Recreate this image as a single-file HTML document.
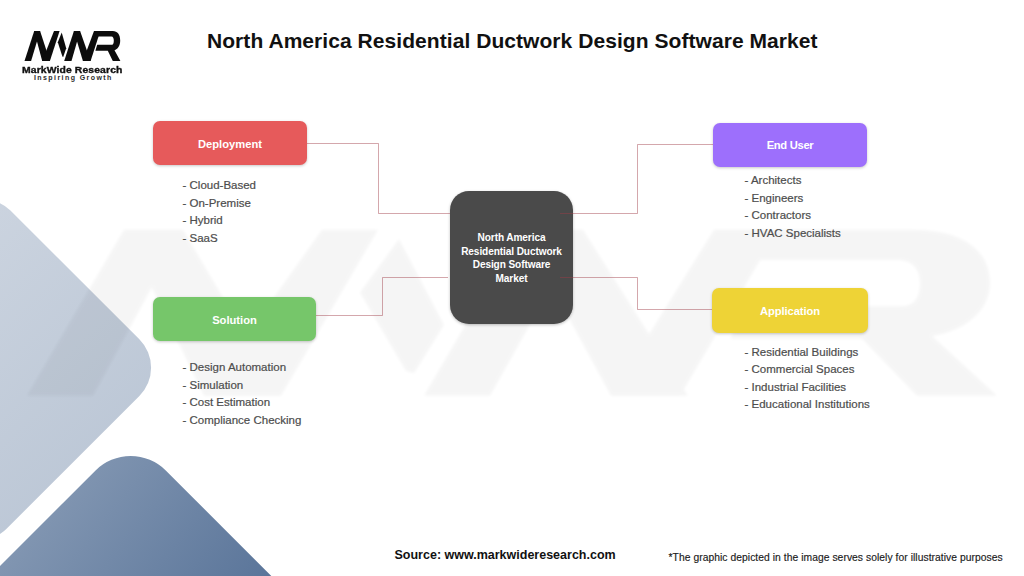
<!DOCTYPE html>
<html><head><meta charset="utf-8">
<style>
html,body{margin:0;padding:0;}
body{width:1024px;height:576px;overflow:hidden;position:relative;background:#fff;font-family:"Liberation Sans",sans-serif;}
.bg{position:absolute;left:0;top:0;}
.t{position:absolute;white-space:nowrap;line-height:normal;}
.box{position:absolute;border-radius:7px;color:#fff;font-weight:bold;font-size:11.2px;display:flex;align-items:center;justify-content:center;box-shadow:0 1px 3px rgba(0,0,0,0.22);padding-top:2px;box-sizing:border-box;}
.list{position:absolute;font-size:11.5px;line-height:17.5px;color:#4d4d4d;white-space:nowrap;-webkit-text-stroke:0.2px #4d4d4d;}
</style></head>
<body>
<svg class="bg" width="1024" height="576" viewBox="0 0 1024 576">
  <defs>
    <linearGradient id="gl" x1="0" y1="0" x2="1" y2="1">
      <stop offset="0" stop-color="#d3dae4"/>
      <stop offset="1" stop-color="#b7c3d3"/>
    </linearGradient>
    <linearGradient id="gd" gradientUnits="userSpaceOnUse" x1="70" y1="450" x2="260" y2="600">
      <stop offset="0" stop-color="#8498b3"/>
      <stop offset="1" stop-color="#597499"/>
    </linearGradient>
    
    <filter id="blur"><feGaussianBlur stdDeviation="1.6"/></filter>
  </defs>
  <!-- light diamond -->
  <path d="M 10.46 210.46 L 139.37 339.37 A 40 40 0 0 1 139.37 395.93 L 6.82 528.48 A 45 45 0 0 1 -56.82 528.48 L -207.65 377.65 L -40.46 210.46 A 36 36 0 0 1 10.46 210.46 Z" fill="url(#gl)"/>
  <!-- dark diamond -->
  <path d="M 166.01 470.71 L 700.00 1004.70 L -434.00 1000.00 L 95.29 470.71 A 50 50 0 0 1 166.01 470.71 Z" fill="url(#gd)"/>
  <!-- watermark -->
  <g filter="url(#blur)" opacity="0.035"><g transform="matrix(10 0 0 5.5 -218 59.8)" fill="#000">
    <polygon points="24.5,61.1 31.1,61.1 40.1,30.9 34.2,30.9"/>
    <polygon points="34.2,30.9 40.1,30.9 49.9,61.1 42.2,61.1"/>
    <polygon points="42.2,61.1 49.9,61.1 59.6,30.9 54,30.9"/>
    <polygon points="61.7,32.6 66.2,48.2 63.2,57 62.4,56.6 57.8,42.3"/>
    <polygon points="64.2,61.1 70.8,61.1 80.1,30.9 73.9,30.9"/>
    <polygon points="73.9,30.9 80.1,30.9 90.6,61.1 82.9,61.1"/>
    <polygon points="82.9,61.1 89.8,61.1 99.6,30.9 93.2,30.9"/>
    <path d="M93.2 30.9 L113 30.9 C118 30.9 120.8 34.5 120.8 40.6 C120.8 46 118 49.5 115 50.2 L121.5 61.1 L113.5 61.1 L108 50.7 L94.8 50.7 L96.6 44.8 L112 44.8 C113.3 44.8 113.8 43 113.8 40.6 C113.8 38 113 36.4 111.5 36.4 L95.2 36.4 Z"/>
  </g></g>
  <!-- logo -->
  <g fill="#0c0c0c">
      <polygon points="24.5,61.1 31.1,61.1 40.1,30.9 34.2,30.9"/>
      <polygon points="34.2,30.9 40.1,30.9 49.9,61.1 42.2,61.1"/>
      <polygon points="42.2,61.1 49.9,61.1 59.6,30.9 54,30.9"/>
      <polygon points="61.7,32.6 66.2,48.2 63.2,57 62.4,56.6 57.8,42.3"/>
      <polygon points="64.2,61.1 71.5,61.1 80.1,30.9 73.9,30.9"/>
      <polygon points="73.9,30.9 80.1,30.9 90.6,61.1 82.9,61.1"/>
      <polygon points="82.9,61.1 90.6,61.1 100.3,30.9 94,30.9"/>
      <path d="M94 30.9 L112.8 30.9 C117.5 30.9 120.2 34.5 120.2 40.6 C120.2 46 117.5 49.5 114.5 50.2 L120.4 61.1 L112.8 61.1 L107.8 50.7 L95.4 50.7 L97.2 44.8 L112 44.8 C113.3 44.8 113.8 43 113.8 40.6 C113.8 38 113 36.4 111.5 36.4 L95.9 36.4 Z"/>
    </g>
</svg>

<div class="t" style="left:22px;top:65px;font-size:9.2px;font-weight:bold;color:#111;transform:scaleX(1.13);transform-origin:0 0;letter-spacing:0.1px;-webkit-text-stroke:0.35px #111;">MarkWide Research</div>
<div class="t" style="left:34px;top:73.9px;font-size:7px;font-weight:bold;color:#2a2a2a;letter-spacing:1.42px;">Inspiring Growth</div>

<div class="t" style="left:207px;top:29.3px;font-size:21px;font-weight:bold;color:#111;letter-spacing:0.06px;">North America Residential Ductwork Design Software Market</div>

<div class="box" style="left:153px;top:121px;width:154px;height:44px;background:#e65a5b;">Deployment</div>
<div class="box" style="left:713px;top:122.5px;width:154px;height:44px;background:#9d6ffc;padding-top:1px;letter-spacing:-0.3px;">End User</div>
<div class="box" style="left:153px;top:297px;width:163px;height:44px;background:#76c66a;">Solution</div>
<div class="box" style="left:712px;top:288px;width:156px;height:45px;background:#eed336;padding-top:0.5px;letter-spacing:-0.1px;">Application</div>
<div class="box" style="left:450px;top:191px;width:123px;height:133px;border-radius:19px;background:#4a4a4a;box-shadow:0 1px 3px rgba(0,0,0,0.25);"></div>
<svg class="bg" width="1024" height="576" viewBox="0 0 1024 576" style="pointer-events:none">
  <g stroke="rgba(160,60,70,0.45)" stroke-width="1" fill="none">
    <polyline points="307,143.5 378.5,143.5 378.5,213.5 450,213.5"/>
    <polyline points="560,213.5 637.5,213.5 637.5,144.5 713,144.5"/>
    <polyline points="316,315.5 382.5,315.5 382.5,277.5 448,277.5"/>
    <polyline points="560,277.5 637.5,277.5 637.5,309.5 712,309.5"/>
  </g>
</svg>
<div class="t" style="left:450px;top:231px;width:123px;text-align:center;font-size:10.1px;line-height:13.6px;font-weight:bold;color:#fff;letter-spacing:-0.1px;">North America<br>Residential Ductwork<br>Design Software<br>Market</div>

<div class="list" style="left:182.5px;top:177.3px;">- Cloud-Based<br>- On-Premise<br>- Hybrid<br>- SaaS</div>
<div class="list" style="left:182.5px;top:359px;">- Design Automation<br>- Simulation<br>- Cost Estimation<br>- Compliance Checking</div>
<div class="list" style="left:744.5px;top:172px;">- Architects<br>- Engineers<br>- Contractors<br>- HVAC Specialists</div>
<div class="list" style="left:744.5px;top:343.5px;">- Residential Buildings<br>- Commercial Spaces<br>- Industrial Facilities<br>- Educational Institutions</div>

<div class="t" style="left:394.5px;top:547.8px;font-size:12.5px;font-weight:bold;color:#111;">Source: www.markwideresearch.com</div>
<div class="t" style="left:668.5px;top:552.2px;font-size:10.3px;color:#1a1a1a;letter-spacing:0.055px;-webkit-text-stroke:0.15px #1a1a1a;">*The graphic depicted in the image serves solely for illustrative purposes</div>
</body></html>
